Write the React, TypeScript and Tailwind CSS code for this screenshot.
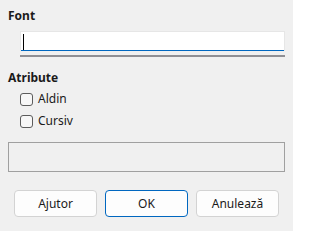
import { useState } from 'react';

function CheckRow({ label }: { label: string }) {
    const [checked, setChecked] = useState(false);
    return (
        <label className="flex h-[22px] items-center gap-[5px] pl-[20px]">
            <input
                type="checkbox"
                checked={checked}
                onChange={() => setChecked(!checked)}
                className="peer sr-only"
            />
            <span className="h-[13px] w-[13px] rounded-[3px] border border-[#5c5c5c] bg-[#f7f7f7]" />
            <span className="text-[12px] leading-[16px] text-[#1a1a1a]">{label}</span>
        </label>
    );
}

export default function App() {
    return (
        <div
            className="flex h-[231px] w-[293px] flex-col bg-[#f0f0f0] text-[12px] text-black"
            style={{ fontFamily: '"Noto Sans", "Open Sans", sans-serif' }}
        >
            <div className="pl-[8px] pt-[8px] text-[12px] font-bold leading-[16px] text-[#1a1a1a]">Font</div>
            <div className="ml-[20px] mt-[7px] flex h-[20px] w-[265px] items-center border border-b-0 border-[#e6e6e6] bg-white shadow-[inset_0_-1px_0_#0067c0]">
                <span className="ml-[2px] h-[16px] w-[1px] bg-black" />
            </div>
            <div className="ml-[20px] mt-[4px] h-[2px] w-[265px] bg-[#8f8f94]" />

            <div className="pl-[8px] pt-[13px] text-[12px] font-bold leading-[16px] text-[#1a1a1a]">Atribute</div>
            <div className="mt-[2px] flex flex-col">
                <CheckRow label="Aldin" />
                <CheckRow label="Cursiv" />
            </div>

            <div className="ml-[8px] mt-[10px] h-[30px] w-[277px] border border-[#a0a0a0] bg-[#f0f0f0]" />

            <div className="ml-[14px] mt-[18px] flex gap-[8px]">
                <button className="h-[27px] w-[83px] rounded-[4px] border border-[#d3d3d3] bg-[#fdfdfd] text-[12px] text-[#1a1a1a]">
                    Ajutor
                </button>
                <button className="h-[27px] w-[83px] rounded-[4px] border border-[#0067c0] bg-[#fdfdfd] text-[12px] text-[#1a1a1a]">
                    OK
                </button>
                <button className="h-[27px] w-[83px] rounded-[4px] border border-[#d3d3d3] bg-[#fdfdfd] text-[12px] text-[#1a1a1a]">
                    Anulează
                </button>
            </div>
        </div>
    );
}
